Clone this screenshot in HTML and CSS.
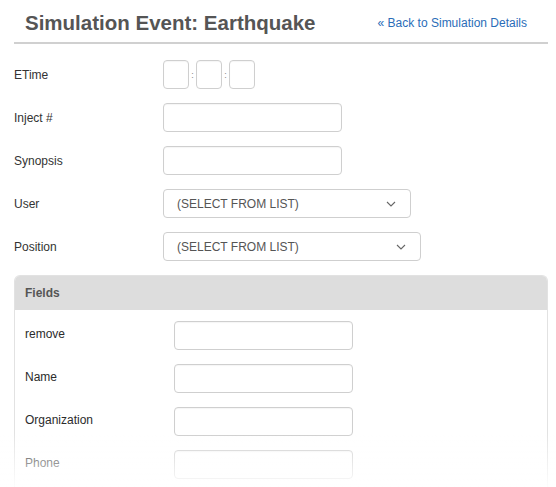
FILE: index.html
```html
<!DOCTYPE html>
<html>
<head>
<meta charset="utf-8">
<link rel="stylesheet" href="styles.css">
</head>
<body>
<div class="page">
  <div class="header">
    <h1 class="title">Simulation Event: Earthquake</h1>
    <a class="back" href="#">« Back to Simulation Details</a>
  </div>
  <div class="form">
    <div class="row">
      <label class="lbl">ETime</label>
      <div class="time">
        <input class="box" type="text"><span class="colon">:</span><input class="box" type="text"><span class="colon">:</span><input class="box" type="text">
      </div>
    </div>
    <div class="row">
      <label class="lbl">Inject #</label>
      <input class="inp" type="text">
    </div>
    <div class="row">
      <label class="lbl">Synopsis</label>
      <input class="inp" type="text">
    </div>
    <div class="row">
      <label class="lbl">User</label>
      <div class="sel sel-user"><span>(SELECT FROM LIST)</span><svg class="chev" width="10" height="6" viewBox="0 0 10 6"><path d="M1 1 L5 5 L9 1" fill="none" stroke="#666" stroke-width="1.1"/></svg></div>
    </div>
    <div class="row">
      <label class="lbl">Position</label>
      <div class="sel sel-pos"><span>(SELECT FROM LIST)</span><svg class="chev" width="10" height="6" viewBox="0 0 10 6"><path d="M1 1 L5 5 L9 1" fill="none" stroke="#666" stroke-width="1.1"/></svg></div>
    </div>
  </div>
  <div class="panel">
    <div class="panel-head">Fields</div>
    <div class="panel-body">
      <div class="row">
        <label class="lbl">remove</label>
        <input class="inp" type="text">
      </div>
      <div class="row">
        <label class="lbl">Name</label>
        <input class="inp" type="text">
      </div>
      <div class="row">
        <label class="lbl">Organization</label>
        <input class="inp" type="text">
      </div>
      <div class="row">
        <label class="lbl">Phone</label>
        <input class="inp" type="text">
      </div>
    </div>
  </div>
</div>
<div class="fade"></div>
</body>
</html>
```
FILE: styles.css
```css
html, body {
  margin: 0;
  padding: 0;
  background: #fff;
  overflow: hidden;
}
body {
  font-family: "Liberation Sans", Arial, sans-serif;
  font-size: 12px;
  color: #333;
}
.page {
  margin: 0 8px 0 14px;
}
.header {
  display: flex;
  align-items: center;
  justify-content: space-between;
  padding: 4px 21px 0 11px;
  border-bottom: 2px solid #d0d0d0;
  box-sizing: border-box;
  height: 44px;
}
.title {
  margin: 0;
  font-size: 20.5px;
  font-weight: bold;
  color: #555;
}
.back {
  color: #2a6db8;
  text-decoration: none;
  font-size: 12px;
}
.form {
  padding-top: 16px;
  display: flex;
  flex-direction: column;
  gap: 14px;
}
.row {
  display: flex;
  align-items: center;
  height: 29px;
}
.lbl {
  width: 149px;
  flex: none;
  color: #333;
}
.panel-body .lbl {
  padding-bottom: 3px;
  color: #2b2b2b;
}
.time {
  display: flex;
  align-items: center;
}
.box, .inp {
  box-sizing: border-box;
  height: 29px;
  border: 1px solid #cfcfcf;
  border-radius: 4px;
  box-shadow: inset 0 1px 1px rgba(0,0,0,0.04);
  background: #fff;
  margin: 0;
  padding: 0 6px;
  font: inherit;
}
.box {
  width: 26px;
}
.colon {
  width: 7px;
  text-align: center;
  font-size: 9px;
  color: #888;
}
.inp {
  width: 179px;
}
.sel {
  box-sizing: border-box;
  height: 29px;
  border: 1px solid #cfcfcf;
  border-radius: 4px;
  display: flex;
  align-items: center;
  justify-content: space-between;
  padding: 0 14px 0 13px;
  color: #555;
  font-size: 12px;
}
.sel-user { width: 248px; }
.sel-pos { width: 258px; }
.chev { display: block; }
.panel {
  margin-top: 14px;
  border: 1px solid #e2e2e2;
  border-bottom: none;
  border-radius: 6px 6px 0 0;
}
.panel-head {
  background: #dddddd;
  height: 34px;
  display: flex;
  align-items: center;
  padding-left: 10px;
  font-weight: bold;
  color: #555;
  border-radius: 5px 5px 0 0;
}
.panel-body {
  padding: 11px 10px 30px;
  display: flex;
  flex-direction: column;
  gap: 14px;
}
.fade {
  position: fixed;
  left: 0;
  right: 0;
  bottom: 0;
  height: 55px;
  background: linear-gradient(to bottom, rgba(255,255,255,0), rgba(255,255,255,0.9));
  pointer-events: none;
}
```
